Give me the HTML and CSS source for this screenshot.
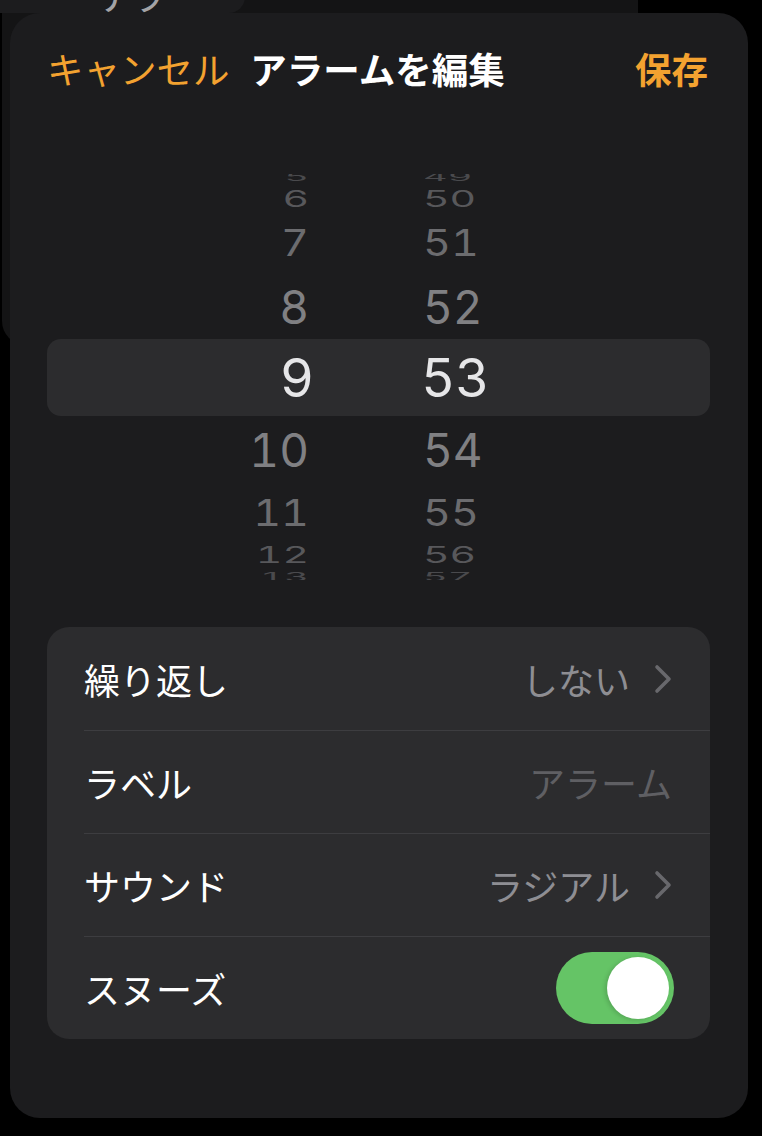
FILE: index.html
```html
<!DOCTYPE html>
<html lang="ja">
<head>
<meta charset="utf-8">
<title>アラームを編集</title>
<link rel="stylesheet" href="styles.css">
</head>
<body>
<div class="backdrop">
  <div class="back-tab"><span class="back-title">アラー</span></div>
</div>
<main class="sheet">
  <header class="nav">
    <span class="cancel">キャンセル</span>
    <h1 class="title">アラームを編集</h1>
    <span class="save">保存</span>
  </header>

  <section class="picker">
    <div class="prow p5"><span class="hour">5</span><span class="min">49</span></div>
    <div class="prow p6"><span class="hour">6</span><span class="min">50</span></div>
    <div class="prow p7"><span class="hour">7</span><span class="min">51</span></div>
    <div class="prow p8"><span class="hour">8</span><span class="min">52</span></div>
    <div class="prow sel"><span class="hour">9</span><span class="min">53</span></div>
    <div class="prow p10"><span class="hour">10</span><span class="min">54</span></div>
    <div class="prow p11"><span class="hour">11</span><span class="min">55</span></div>
    <div class="prow p12"><span class="hour">12</span><span class="min">56</span></div>
    <div class="prow p13"><span class="hour">13</span><span class="min">57</span></div>
  </section>

  <section class="list">
    <div class="item">
      <span class="label">繰り返し</span>
      <span class="value">しない</span>
      <svg class="chev" width="18" height="30" viewBox="0 0 18 30"><path d="M3 3 L15 15 L3 27" fill="none" stroke="#68686c" stroke-width="3.6" stroke-linecap="round" stroke-linejoin="round"/></svg>
    </div>
    <div class="item">
      <span class="label">ラベル</span>
      <span class="value placeholder">アラーム</span>
    </div>
    <div class="item">
      <span class="label">サウンド</span>
      <span class="value">ラジアル</span>
      <svg class="chev" width="18" height="30" viewBox="0 0 18 30"><path d="M3 3 L15 15 L3 27" fill="none" stroke="#68686c" stroke-width="3.6" stroke-linecap="round" stroke-linejoin="round"/></svg>
    </div>
    <div class="item">
      <span class="label">スヌーズ</span>
      <span class="toggle on"><span class="knob"></span></span>
    </div>
  </section>
</main>
</body>
</html>
```

FILE: styles.css
```css
* { box-sizing: border-box; }

html, body {
  margin: 0;
  padding: 0;
  background: #000;
  width: 762px;
  height: 1136px;
  overflow: hidden;
  font-family: "Noto Sans CJK JP", "Noto Sans", sans-serif;
}

body {
  position: relative;
  padding-top: 13px;
}

/* dimmed previous screen behind the sheet */
.backdrop {
  position: absolute;
  left: 2px;
  top: -40px;
  width: 636px;
  height: 385px;
  background: #141415;
  border-radius: 24px;
  z-index: 0;
}

.back-tab {
  position: absolute;
  left: -2px;
  top: 0;
  width: 245px;
  height: 53px;
  background: #1c1c1e;
  border-bottom-right-radius: 16px;
  overflow: hidden;
}

.back-title {
  position: absolute;
  left: 100px;
  top: 16px;
  font-size: 32px;
  line-height: 40px;
  color: #a3a3a6;
  font-weight: 500;
}

.sheet {
  position: relative;
  z-index: 1;
  margin-left: 10px;
  width: 738px;
  height: 1105px;
  background: #1c1c1e;
  border-radius: 30px;
  overflow: hidden;
}

.nav {
  display: grid;
  grid-template-columns: 1fr auto 1fr;
  align-items: center;
  height: 112px;
  padding: 0 40px 0 37px;
}

.cancel {
  color: #f3a230;
  font-size: 36.5px;
  line-height: 1;
}

.title {
  margin: 0;
  color: #fff;
  font-size: 36.5px;
  font-weight: 700;
  line-height: 1;
}

.save {
  justify-self: end;
  color: #f3a230;
  font-size: 36.5px;
  font-weight: 700;
  line-height: 1;
}

/* time picker wheel */
.picker {
  margin: 49px 38px 0 37px;
  height: 406px;
  overflow: hidden;
  font-family: "Inter", "Liberation Sans", sans-serif;
  font-variant-numeric: tabular-nums;
}

.prow {
  display: grid;
  grid-template-columns: 262px 1fr;
  align-items: center;
}

.hour, .min {
  display: block;
  line-height: 10px;
  font-weight: 400;
}

.hour {
  text-align: right;
  transform-origin: right center;
}

.min {
  justify-self: start;
  padding-left: 114px;
  transform-origin: left center;
}

.p5  { height: 13px; color: #4a4a4d; font-size: 38px; }
.p6  { height: 23px; color: #58585b; font-size: 41px; }
.p7  { height: 64px; color: #6c6c6f; font-size: 43px; }
.p8  { height: 65px; color: #808083; font-size: 46px; }
.sel { height: 77px; color: #e6e6e8; font-size: 53px; background: #2c2c2e; border-radius: 14px; }
.p10 { height: 68px; color: #808083; font-size: 46px; }
.p11 { height: 56px; color: #6c6c6f; font-size: 43px; }
.p12 { height: 30px; color: #58585b; font-size: 41px; }
.p13 { height: 10px; color: #4a4a4d; font-size: 38px; }

.p6 span, .p12 span { transform: scaleY(0.55); }
.p7 span, .p11 span { transform: scaleY(0.86); }
.p5 span { transform: translateY(-4px) scaleY(0.3); }
.p13 span { transform: translateY(2px) scaleY(0.3); }

.sel .hour { margin-right: -5px; }
.sel .min { padding-left: 112px; }

/* settings list */
.list {
  margin: 47px 38px 0 37px;
  background: #2c2c2e;
  border-radius: 22px;
  overflow: hidden;
}

.item {
  display: flex;
  align-items: center;
  height: 103px;
  margin-left: 37px;
  padding-right: 38px;
}

.item + .item {
  border-top: 1px solid #3d3d40;
}

.label {
  flex: 1;
  color: #fff;
  font-size: 36px;
  line-height: 1;
}

.value {
  color: #8e8e93;
  font-size: 36px;
  line-height: 1;
}

.value.placeholder {
  color: #5f5f63;
}

.chev {
  margin-left: 24px;
  flex: none;
}

.toggle {
  display: flex;
  justify-content: flex-end;
  align-items: center;
  width: 118px;
  height: 72px;
  padding: 5px;
  margin-right: -2px;
  border-radius: 36px;
  background: #65c466;
}

.knob {
  width: 62px;
  height: 62px;
  border-radius: 50%;
  background: #fff;
  box-shadow: -2px 1px 4px rgba(0,0,0,0.15);
}
```
